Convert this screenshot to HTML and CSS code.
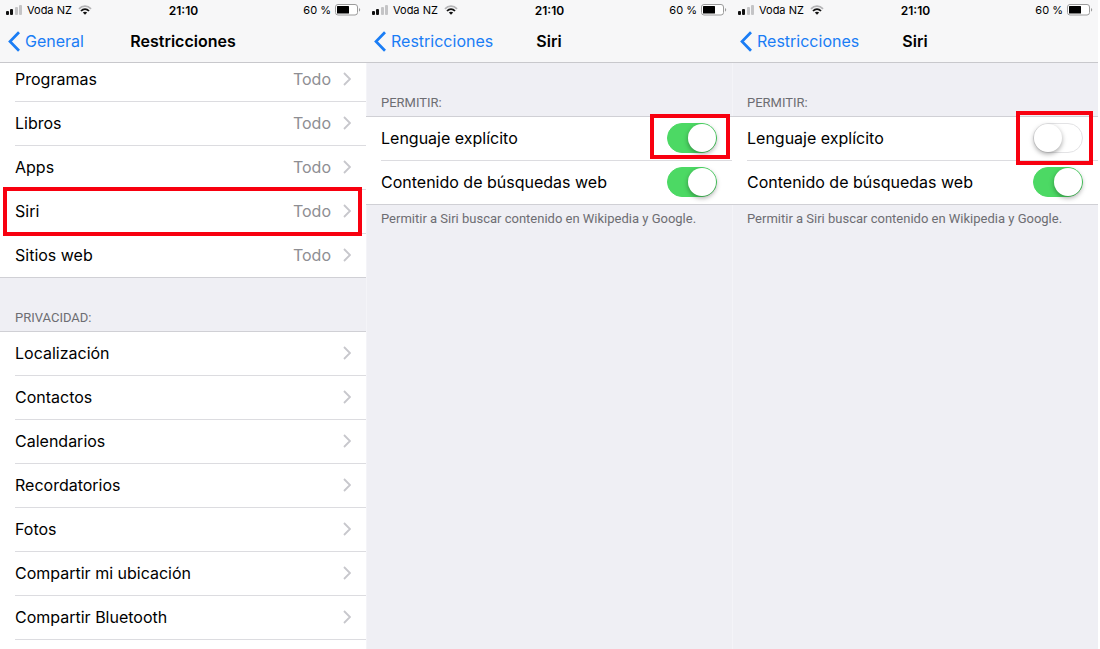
FILE: index.html
```html
<!DOCTYPE html>
<html lang="es">
<head>
  <meta charset="UTF-8">
  <meta name="viewport" content="width=device-width, initial-scale=1.0">
  <title>Restricciones</title>
  <link rel="stylesheet" href="styles.css">
</head>
<body>
  <svg class="sprite" aria-hidden="true">
    <symbol id="signal" viewBox="0 0 17 10">
      <rect x="0" y="6" width="3" height="4" rx="1" fill="#111"/>
      <rect x="4" y="4" width="3" height="6" rx="1" fill="#111"/>
      <rect x="9" y="2" width="3" height="8" rx="1" fill="#c4c4c6"/>
      <rect x="13" y="0" width="3" height="10" rx="1" fill="#c4c4c6"/>
    </symbol>
    <symbol id="wifi" viewBox="0 0 14 10">
      <path d="M1 3.8C4.4 0.3 9.6 0.3 13 3.8" fill="none" stroke="#b4b4b6" stroke-width="1.8"/>
      <path d="M3 6C5.3 3.6 8.7 3.6 11 6" fill="none" stroke="#111" stroke-width="1.8"/>
      <path d="M4.8 7.6C6.1 6.4 7.9 6.4 9.2 7.6L7 9.8Z" fill="#111"/>
    </symbol>
    <symbol id="battery" viewBox="0 0 26 12">
      <rect x="0.5" y="0.5" width="22" height="10.5" rx="2.5" fill="#fff" stroke="#9b9b9b"/>
      <rect x="2" y="2" width="12" height="7.5" rx="0.5" fill="#000"/>
      <path d="M24 4C25.6 4.4 25.6 7.2 24 7.6Z" fill="#9b9b9b"/>
    </symbol>
    <symbol id="back" viewBox="0 0 12 21">
      <path d="M11 1.2L2 10.5L11 19.8" fill="none" stroke="#1a7df5" stroke-width="2.7"/>
    </symbol>
    <symbol id="chevron" viewBox="0 0 8 14">
      <path d="M1 1L7 7L1 13" fill="none" stroke="#c7c7cc" stroke-width="1.8"/>
    </symbol>
  </svg>

  <main class="screens">
    <section class="screen">
      <header class="topbar">
        <div class="status">
          <div class="carrier"><svg class="signal"><use href="#signal"/></svg><span>Voda NZ</span><svg class="wifi"><use href="#wifi"/></svg></div>
          <span class="time">21:10</span>
          <div class="power"><span>60 %</span><svg class="battery"><use href="#battery"/></svg></div>
        </div>
        <nav class="nav">
          <a class="back" href="#"><svg><use href="#back"/></svg>General</a>
          <h1>Restricciones</h1>
        </nav>
      </header>
      <ul class="list scrolled">
        <li><a class="row" href="#">Programas<span class="value">Todo</span><svg><use href="#chevron"/></svg></a></li>
        <li><a class="row" href="#">Libros<span class="value">Todo</span><svg><use href="#chevron"/></svg></a></li>
        <li><a class="row" href="#">Apps<span class="value">Todo</span><svg><use href="#chevron"/></svg></a></li>
        <li class="marked"><a class="row" href="#">Siri<span class="value">Todo</span><svg><use href="#chevron"/></svg></a></li>
        <li><a class="row" href="#">Sitios web<span class="value">Todo</span><svg><use href="#chevron"/></svg></a></li>
      </ul>
      <h2>PRIVACIDAD:</h2>
      <ul class="list">
        <li><a class="row" href="#">Localización<svg><use href="#chevron"/></svg></a></li>
        <li><a class="row" href="#">Contactos<svg><use href="#chevron"/></svg></a></li>
        <li><a class="row" href="#">Calendarios<svg><use href="#chevron"/></svg></a></li>
        <li><a class="row" href="#">Recordatorios<svg><use href="#chevron"/></svg></a></li>
        <li><a class="row" href="#">Fotos<svg><use href="#chevron"/></svg></a></li>
        <li><a class="row" href="#">Compartir mi ubicación<svg><use href="#chevron"/></svg></a></li>
        <li><a class="row" href="#">Compartir Bluetooth<svg><use href="#chevron"/></svg></a></li>
        <li class="row"></li>
      </ul>
    </section>

    <section class="screen">
      <header class="topbar">
        <div class="status">
          <div class="carrier"><svg class="signal"><use href="#signal"/></svg><span>Voda NZ</span><svg class="wifi"><use href="#wifi"/></svg></div>
          <span class="time">21:10</span>
          <div class="power"><span>60 %</span><svg class="battery"><use href="#battery"/></svg></div>
        </div>
        <nav class="nav">
          <a class="back" href="#"><svg><use href="#back"/></svg>Restricciones</a>
          <h1>Siri</h1>
        </nav>
      </header>
      <h2>PERMITIR:</h2>
      <ul class="list">
        <li class="row">
          <label for="explicit-on">Lenguaje explícito</label>
          <span class="control marked"><input class="switch" type="checkbox" id="explicit-on" checked></span>
        </li>
        <li class="row">
          <label for="web-1">Contenido de búsquedas web</label>
          <span class="control"><input class="switch" type="checkbox" id="web-1" checked></span>
        </li>
      </ul>
      <p class="note">Permitir a Siri buscar contenido en Wikipedia y Google.</p>
    </section>

    <section class="screen">
      <header class="topbar">
        <div class="status">
          <div class="carrier"><svg class="signal"><use href="#signal"/></svg><span>Voda NZ</span><svg class="wifi"><use href="#wifi"/></svg></div>
          <span class="time">21:10</span>
          <div class="power"><span>60 %</span><svg class="battery"><use href="#battery"/></svg></div>
        </div>
        <nav class="nav">
          <a class="back" href="#"><svg><use href="#back"/></svg>Restricciones</a>
          <h1>Siri</h1>
        </nav>
      </header>
      <h2>PERMITIR:</h2>
      <ul class="list">
        <li class="row">
          <label for="explicit-off">Lenguaje explícito</label>
          <span class="control marked tall"><input class="switch" type="checkbox" id="explicit-off"></span>
        </li>
        <li class="row">
          <label for="web-2">Contenido de búsquedas web</label>
          <span class="control"><input class="switch" type="checkbox" id="web-2" checked></span>
        </li>
      </ul>
      <p class="note">Permitir a Siri buscar contenido en Wikipedia y Google.</p>
    </section>
  </main>
</body>
</html>
```
FILE: styles.css
```css
* {
  box-sizing: border-box;
}
body {
  margin: 0;
  background: #fff;
  color: #000;
  font-family: Inter, "Liberation Sans", sans-serif;
  font-size: 16px;
}
h1, h2, p, ul {
  margin: 0;
  padding: 0;
}
ul {
  list-style: none;
}
a {
  color: inherit;
  text-decoration: none;
}
.sprite {
  display: none;
}
.screens {
  display: grid;
  grid-template-columns: repeat(3, 1fr);
  height: 100vh;
  padding-right: 2px;
  overflow: hidden;
}
.screen {
  background: #efeff4;
  min-width: 0;
}
.screen + .screen {
  box-shadow: inset 1px 0 #f4f4f8;
}

/* status and navigation bars */
.topbar {
  position: relative;
  z-index: 1;
  height: 63px;
  background: #f7f7f8;
  border-bottom: 1px solid #c8c8cc;
}
.status, .nav {
  display: grid;
  grid-template-columns: 1fr auto 1fr;
  align-items: center;
}
.status {
  height: 20px;
  padding: 0 5px 0 6px;
  font-size: 11px;
}
.carrier, .power {
  display: flex;
  align-items: center;
}
.carrier {
  gap: 4px;
}
.power {
  justify-content: flex-end;
  gap: 4px;
}
.signal {
  width: 17px;
  height: 10px;
}
.wifi {
  width: 14px;
  height: 10px;
  margin-left: 2px;
}
.battery {
  width: 26px;
  height: 12px;
}
.time {
  font-size: 12px;
  font-weight: 600;
}
.nav {
  height: 42px;
  padding: 0 8px;
}
.back {
  display: flex;
  align-items: center;
  gap: 5px;
  color: #1a7df5;
}
.back svg {
  width: 12px;
  height: 21px;
}
h1 {
  font-size: 16px;
  font-weight: 600;
}

/* settings lists */
h2, .note {
  color: #6d6d72;
  font-family: Roboto, "Liberation Sans", sans-serif;
  font-size: 13px;
  font-weight: 400;
  line-height: 16px;
}
h2 {
  height: 53px;
  padding: 32px 15px 0;
}
.note {
  padding: 6px 15px;
}
.list {
  background: #fff;
  border-bottom: 1px solid #d0d0d5;
}
.list.scrolled {
  margin-top: -6px;
}
.list li {
  position: relative;
}
.list li::before {
  content: "";
  position: absolute;
  top: 0;
  left: 15px;
  right: 0;
  border-top: 1px solid #dcdce0;
}
.list li:first-child::before {
  left: 0;
  border-color: #d0d0d5;
}
.row {
  display: flex;
  align-items: center;
  height: 44px;
  padding: 0 15px;
}
.row svg {
  width: 8px;
  height: 14px;
  margin-left: auto;
}
.value {
  margin-left: auto;
  color: #8e8e93;
}
.value + svg {
  margin-left: 12px;
}

/* switches */
.control {
  position: relative;
  display: flex;
  margin-left: auto;
}
.switch {
  appearance: none;
  display: flex;
  width: 50px;
  height: 30px;
  margin: 0;
  padding: 0;
  border: 1px solid #e3e3e5;
  border-radius: 15px;
  background: #fff;
}
.switch::before {
  content: "";
  width: 28px;
  height: 28px;
  border-radius: 50%;
  background: #fff;
  box-shadow: 0 2px 5px rgba(0, 0, 0, 0.35);
}
.switch:checked {
  justify-content: flex-end;
  border-color: #4cd964;
  background: #4cd964;
}

/* red highlight frames */
.marked::after {
  content: "";
  position: absolute;
  z-index: 2;
  border: 4px solid #f8000f;
  pointer-events: none;
}
li.marked::after {
  inset: -2px 4px -3px 3px;
}
.control.marked::after {
  inset: -9px -13px -6px -17px;
}
.control.tall::after {
  inset: -12px -10px -12px -17px;
}
```
